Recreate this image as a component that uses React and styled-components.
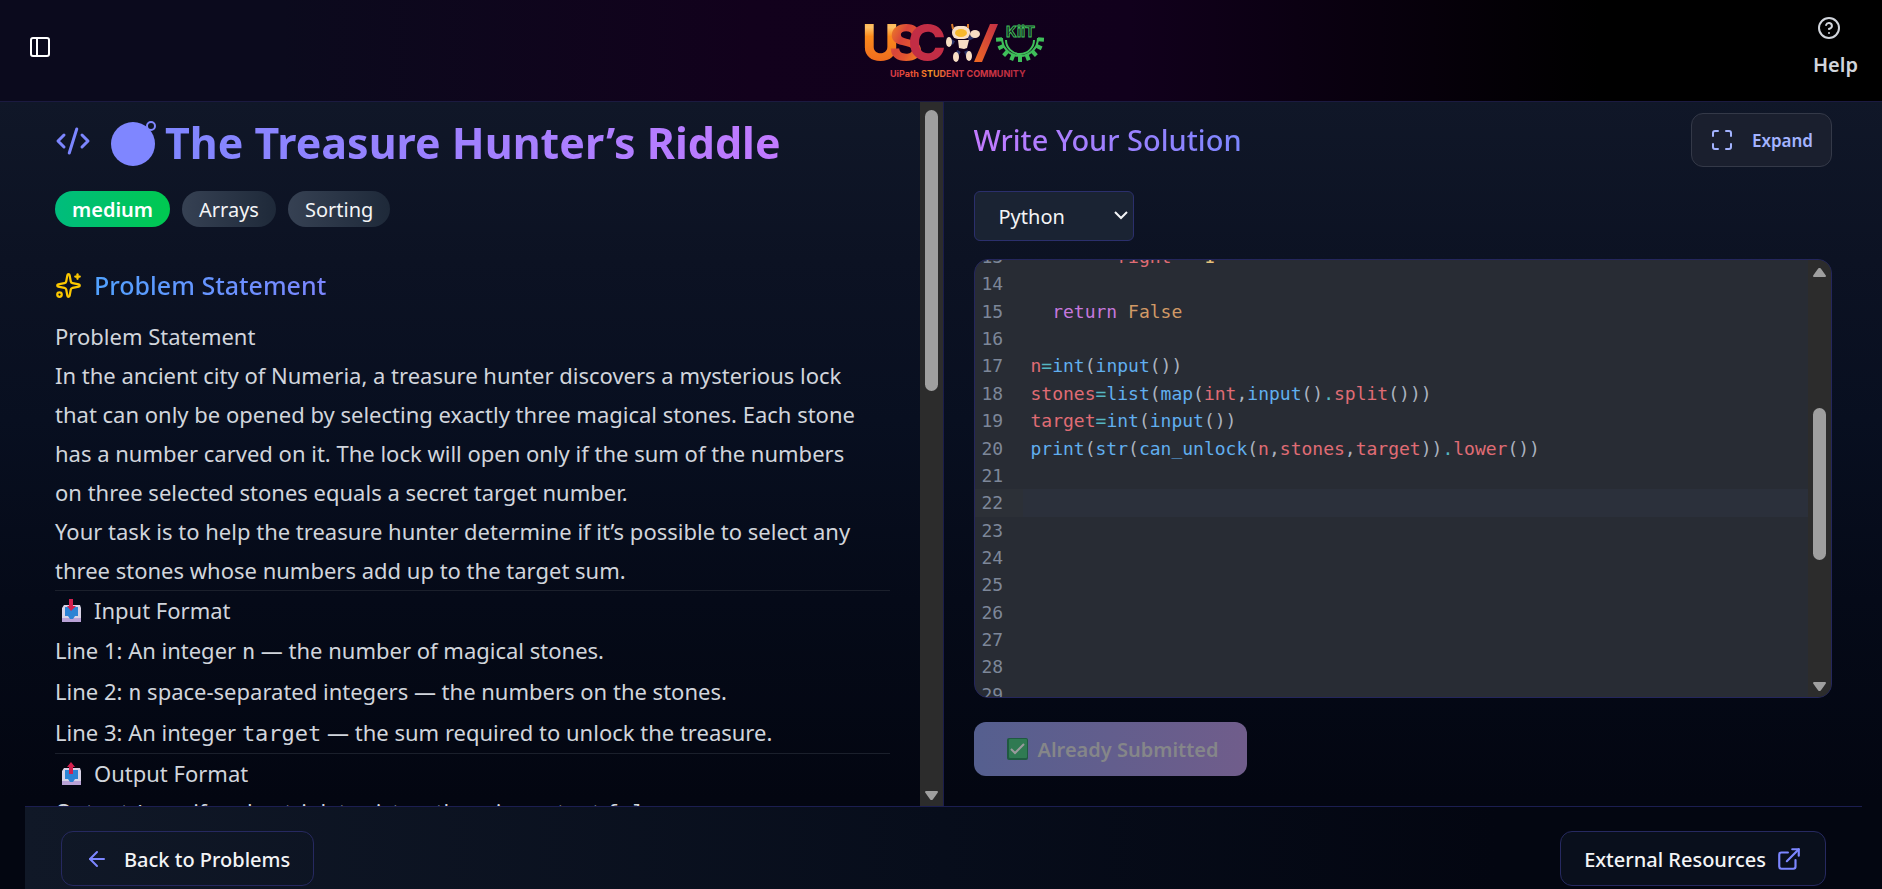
import React from "react";
import styled, { createGlobalStyle } from "styled-components";
import { PanelLeft, CircleHelp, CodeXml, Sparkles, Maximize, ArrowLeft, ExternalLink } from "lucide-react";

const sans = `"Noto Sans", "Open Sans", sans-serif`;
const mono = `"DejaVu Sans Mono", "Liberation Mono", monospace`;

const Global = createGlobalStyle`
  *, *::before, *::after { box-sizing: border-box; }
  body { margin: 0; background: #030712; color: #d1d5dc; font-family: ${sans}; }
  h1, h2, p { margin: 0; }
  button, select { font-family: inherit; }
`;

const Page = styled.div`
  height: 100vh;
  display: flex;
  flex-direction: column;
  overflow: hidden;
  background: linear-gradient(180deg, #101728 100px, #0c1223 260px, #080f20 420px, #050a18 600px, #030611 800px);
`;

const Header = styled.header`
  flex: none;
  display: grid;
  grid-template-columns: 1fr auto 1fr;
  align-items: center;
  height: 102px;
  padding: 0 24px 0 28px;
  border-bottom: 1px solid #1b1a40;
  background: linear-gradient(90deg, #0b0a1d 0%, #0b0a1d 15%, #12011c 40%, #11001c 60%, #000 85%);
`;

const MenuButton = styled.button`
  justify-self: start;
  display: flex;
  margin-bottom: 7px;
  padding: 0;
  border: 0;
  background: none;
  color: #fff;
`;

const HelpLink = styled.a`
  justify-self: end;
  display: flex;
  flex-direction: column;
  gap: 10px;
  margin-bottom: 6px;
  color: #d1d5dc;
  font-size: 20px;
  line-height: 30px;
  font-weight: 600;
  text-decoration: none;
  svg { margin-left: 4px; }
`;

const LogoBox = styled.svg`
  display: block;
  width: 190px;
  height: 70px;
  margin-left: 24px;
`;

const Workspace = styled.main`
  flex: 1;
  min-height: 0;
  display: flex;
  flex-direction: column;
  padding: 0 20px 0 25px;
`;

const Panes = styled.div`
  flex: 1;
  min-height: 0;
  display: grid;
  grid-template-columns: 1fr 1fr;
  grid-template-rows: minmax(0, 1fr);
`;

const ProblemPane = styled.section`
  min-width: 0;
  min-height: 0;
  display: flex;
  border-right: 1px solid #1b1d4c;
`;

const ProblemBody = styled.div`
  flex: 1;
  min-width: 0;
  overflow: hidden;
  padding: 12px 30px 0;
`;

const TitleRow = styled.div`
  display: flex;
  align-items: center;
  height: 58px;
  color: #7c86ff;
  > svg { margin-bottom: 5px; }
`;

const Title = styled.h1`
  display: flex;
  align-items: center;
  margin-left: 20px;
  white-space: nowrap;
  font-size: 43px;
  line-height: 58px;
  font-weight: 700;
  span {
    background: linear-gradient(90deg, #7f86ff, #c27aff);
    background-clip: text;
    color: transparent;
  }
`;

const Badges = styled.div`
  display: flex;
  gap: 12px;
  margin-top: 19px;
`;

const Badge = styled.span`
  height: 36px;
  padding: 0 17px;
  border-radius: 18px;
  font-size: 20px;
  line-height: 37px;
  color: ${(p) => (p.$level ? "#fff" : "#f3f4f6")};
  font-weight: ${(p) => (p.$level ? 600 : 400)};
  background: ${(p) => (p.$level ? "linear-gradient(90deg, #00bc7d, #00c950)" : "linear-gradient(90deg, #364153, #1e2939)")};
`;

const SectionHead = styled.div`
  display: flex;
  align-items: center;
  gap: 12px;
  margin: 38px 0 12px;
  color: #fcc800;
`;

const GradientHeading = styled.h2`
  font-weight: 500;
  font-size: ${(p) => p.$size}px;
  line-height: 40px;
  background: linear-gradient(90deg, ${(p) => p.$from}, ${(p) => p.$to});
  background-clip: text;
  color: transparent;
`;

const Prose = styled.div`
  font-size: 22px;
  line-height: 39px;
`;

const Paragraph = styled.p`
  max-width: 818px;
`;

const FormatHead = styled.p`
  display: flex;
  align-items: center;
  gap: 12px;
  padding-left: 7px;
  border-top: 1px solid #1b202c;
`;

const FormatLine = styled.p`
  line-height: ${(p) => (p.$tight ? 37 : 41)}px;
  white-space: nowrap;
  code { font-family: ${mono}; font-size: 22px; line-height: 1; }
`;

const Track = styled.div`
  flex: none;
  display: flex;
  flex-direction: column;
  align-items: center;
  justify-content: space-between;
  width: 23px;
  padding: 6px 0 4px;
  background: #2c2c2c;
`;

const Thumb = styled.div`
  width: 13px;
  height: ${(p) => p.$h};
  margin-top: ${(p) => p.$top};
  margin-bottom: auto;
  border-radius: 7px;
  background: #9f9f9f;
`;

const SolutionPane = styled.section`
  min-width: 0;
  min-height: 0;
  display: flex;
  flex-direction: column;
  padding: 11px 30px 30px;
`;

const SolutionHead = styled.div`
  display: flex;
  justify-content: space-between;
  align-items: center;
`;

const ExpandButton = styled.button`
  display: flex;
  align-items: center;
  gap: 18px;
  height: 54px;
  padding: 0 18px;
  border: 1px solid #343948;
  border-radius: 12px;
  background: #1a1f2e;
  color: #a3b3ff;
  font-size: 17px;
  font-weight: 600;
`;

const SelectWrap = styled.label`
  position: relative;
  width: 160px;
  margin: 24px 0 18px;
  svg { position: absolute; right: 6px; top: 18px; pointer-events: none; }
`;

const LanguageSelect = styled.select`
  appearance: none;
  display: block;
  width: 100%;
  height: 50px;
  padding: 0 24px;
  border: 1px solid #2b2f6c;
  border-radius: 6px;
  background: #1a2333;
  color: #f3f4f6;
  font-size: 20px;
`;

const Editor = styled.div`
  flex: 1;
  min-height: 0;
  display: flex;
  overflow: hidden;
  border: 1px solid #24265c;
  border-radius: 14px;
  background: #282c34;
`;

const Code = styled.div`
  flex: 1;
  min-width: 0;
  margin-top: -17px;
  outline: none;
  color: #abb2bf;
  font-family: ${mono};
  font-size: 18px;
  line-height: 1.52;
  white-space: pre;
`;

const CodeLine = styled.div`
  display: flex;
  background: ${(p) => (p.$active ? "#2b303b" : "none")};
`;

const Gutter = styled.span`
  width: 48px;
  padding-left: 7px;
  color: #7d8799;
  background: ${(p) => (p.$active ? "#2c3037" : "none")};
`;

const Source = styled.code`
  padding-left: 8px;
  font-family: inherit;
`;

const tokenColors = { k: "#c678dd", a: "#d19a66", v: "#e06c75", f: "#61afef", o: "#56b6c2", d: "#e5c07b", p: "#abb2bf" };
const Token = styled.span`
  color: ${(p) => tokenColors[p.$kind]};
`;

const SubmitButton = styled.button`
  align-self: flex-start;
  flex: none;
  display: flex;
  align-items: center;
  gap: 10px;
  height: 54px;
  margin-top: 24px;
  padding: 0 28px 0 33px;
  border: 0;
  border-radius: 12px;
  background: linear-gradient(90deg, #555f8f, #705d8b);
  color: #858689;
  font-size: 20px;
  font-weight: 600;
`;

const Footer = styled.footer`
  flex: none;
  display: flex;
  justify-content: space-between;
  height: 83px;
  padding: 24px 36px 3px;
  border-top: 1px solid #1b1e50;
  background: linear-gradient(90deg, #101827, #070d1b 50%, #030611 80%);
`;

const FooterLink = styled.a`
  display: flex;
  align-items: center;
  gap: ${(p) => p.$gap}px;
  height: 55px;
  padding: 1px 23px 0;
  border: 1px solid #262960;
  border-radius: 12px;
  background: ${(p) => p.$bg};
  color: #f3f4f6;
  font-size: 20px;
  font-weight: 500;
  text-decoration: none;
  svg { color: #7c86ff; }
`;

function Logo() {
  const teeth = [];
  for (let i = 0; i <= 8; i++) {
    const a = ((i * 21.5 + 4) * Math.PI) / 180;
    teeth.push(
      <path
        key={i}
        d={`M${160 + 18 * Math.cos(a)} ${22 + 18 * Math.sin(a)}L${160 + 24 * Math.cos(a)} ${22 + 24 * Math.sin(a)}`}
        strokeWidth="4"
      />
    );
  }
  return (
    <LogoBox viewBox="0 0 190 70" role="img" aria-label="USC KIIT, UiPath Student Community">
      <defs>
        <linearGradient id="u" x1="0" y1="0" x2="0" y2="1"><stop offset="0" stopColor="#fb9a1c" /><stop offset="0.25" stopColor="#ffc267" /><stop offset="0.4" stopColor="#fb8a1c" /><stop offset="1" stopColor="#e85d1f" /></linearGradient>
        <linearGradient id="s" x1="0" y1="0" x2="1" y2="1"><stop offset="0" stopColor="#fba31c" /><stop offset="0.4" stopColor="#d8443a" /><stop offset="0.6" stopColor="#e2542f" /><stop offset="1" stopColor="#fba31c" /></linearGradient>
        <linearGradient id="w" x1="0" x2="1"><stop offset="0" stopColor="#d8384a" /><stop offset="0.22" stopColor="#ef5b2c" /><stop offset="0.3" stopColor="#f6a022" /><stop offset="0.45" stopColor="#dd3f45" /><stop offset="1" stopColor="#b92c42" /></linearGradient>
        <linearGradient id="slash" x1="0" y1="1" x2="1" y2="0"><stop offset="0" stopColor="#ee6a22" /><stop offset="1" stopColor="#c32f45" /></linearGradient>
      </defs>
      <g fontFamily="Inter, sans-serif" fontWeight="800" fontSize="51">
        <text x="2" y="45" fill="url(#u)">U</text>
        <text x="29" y="45" fill="url(#s)">S</text>
        <text x="48" y="45" fill="#c22d45">C</text>
      </g>
      <g stroke="#2c3468" strokeWidth="4" fill="none"><path d="M94 27l-5-3M108 23l8-4M99 35l-3 5M106 35l2 5" /></g>
      <g fill="#f8dfc4">
        <ellipse cx="89" cy="26" rx="3" ry="5" /><ellipse cx="115" cy="18" rx="5" ry="4" />
        <rect x="92" y="10" width="18" height="13" rx="6" /><path d="M98 24h11l-2 8-3 1-5-1z" />
        <ellipse cx="96" cy="41" rx="3" ry="5" /><ellipse cx="109" cy="40" rx="3" ry="5" />
      </g>
      <ellipse cx="101" cy="17" rx="6" ry="4" fill="#f7b92c" />
      <path d="M93 13l-1-5M108 12l0-4" stroke="#d97a2a" strokeWidth="2" />
      <path d="M114 46h8l16-38h-8z" fill="url(#slash)" />
      <g stroke="#3fbf5a" fill="none" strokeWidth="2">
        <path d="M142 22a18 18 0 0 0 36 0M146 24a14 14 0 0 0 28 0" />
        {teeth}
      </g>
      <text x="146" y="21" fontFamily="Inter, sans-serif" fontWeight="700" fontSize="15" fill="#100318" stroke="#3fbf5a">KiiT</text>
      <text x="30" y="61" fontFamily="Inter, sans-serif" fontWeight="700" fontSize="9" fill="url(#w)">UiPath STUDENT COMMUNITY</text>
    </LogoBox>
  );
}

const CoinGlyph = () => (
  <svg width="54" height="50" viewBox="0 0 54 50" aria-hidden="true">
    <circle cx="22" cy="26" r="22" fill="#7f86ff" />
    <circle cx="40" cy="8" r="4" fill="#0f1626" stroke="#7f86ff" strokeWidth="2" />
  </svg>
);

const TrayIcon = ({ up }) => (
  <svg width="20" height="24" viewBox="0 0 20 24" role="img" aria-label={up ? "outbox" : "inbox"}>
    <path d="M2 6h16l1 3v14H0V9z" fill="#d8d3e6" />
    <path d="M0 19h19v4H0z" fill="#b9a2d6" />
    <path d="M3 8h13v9l-3 0-2 3H8l-2-3H3z" fill="#2b83d4" />
    {up ? <path d="M9 0l4 5h-2v7H7V5H5z" fill="#d3204e" /> : <path d="M7 0h4v7h3l-5 5-4-5h2z" fill="#d3204e" />}
  </svg>
);

const CheckBoxIcon = () => (
  <svg width="21" height="22" viewBox="0 0 21 22" aria-hidden="true">
    <rect width="21" height="22" rx="2" fill="#1f5a40" />
    <rect x="2" y="1" width="18" height="19" rx="1" fill="#2f7a52" />
    <path d="M4 11l4 4 9-9" fill="none" stroke="#9a9b9d" strokeWidth="2" />
  </svg>
);

const Arrow = ({ down }) => (
  <svg width="15" height="12" viewBox="0 0 15 12" aria-hidden="true">
    <path d={down ? "M2 2h11l-5 7h-1z" : "M2 10h11l-5-7h-1z"} fill="#9f9f9f" stroke="#9f9f9f" strokeWidth="2" strokeLinejoin="round" />
  </svg>
);

const lines = [
  [13, [["p", "        "], ["v", "right "], ["o", "-="], ["d", "1"]]],
  [14, []],
  [15, [["p", "  "], ["k", "return "], ["a", "False"]]],
  [16, []],
  [17, [["v", "n"], ["o", "="], ["f", "int"], ["p", "("], ["f", "input"], ["p", "())"]]],
  [18, [["v", "stones"], ["o", "="], ["f", "list"], ["p", "("], ["f", "map"], ["p", "("], ["v", "int"], ["p", ","], ["f", "input"], ["p", "()"], ["o", "."], ["v", "split"], ["p", "()))"]]],
  [19, [["v", "target"], ["o", "="], ["f", "int"], ["p", "("], ["f", "input"], ["p", "())"]]],
  [20, [["f", "print"], ["p", "("], ["f", "str"], ["p", "("], ["f", "can_unlock"], ["p", "("], ["v", "n"], ["p", ","], ["v", "stones"], ["p", ","], ["v", "target"], ["p", "))"], ["o", "."], ["v", "lower"], ["p", "())"]]],
  [21, []], [22, []], [23, []], [24, []], [25, []], [26, []], [27, []], [28, []], [29, []],
];

export default function App() {
  return (
    <Page>
      <Global />
      <Header>
        <MenuButton type="button" aria-label="Toggle sidebar"><PanelLeft size={24} /></MenuButton>
        <Logo />
        <HelpLink href="#help"><CircleHelp size={24} />Help</HelpLink>
      </Header>
      <Workspace>
        <Panes>
          <ProblemPane>
            <ProblemBody>
              <TitleRow>
                <CodeXml size={36} />
                <Title><CoinGlyph /><span>The Treasure Hunter’s Riddle</span></Title>
              </TitleRow>
              <Badges>
                <Badge $level>medium</Badge>
                <Badge>Arrays</Badge>
                <Badge>Sorting</Badge>
              </Badges>
              <SectionHead>
                <Sparkles size={27} />
                <GradientHeading $size={25} $from="#51a2ff" $to="#7c86ff">Problem Statement</GradientHeading>
              </SectionHead>
              <Prose>
                <Paragraph>Problem Statement</Paragraph>
                <Paragraph>In the ancient city of Numeria, a treasure hunter discovers a mysterious lock that can only be opened by selecting exactly three magical stones. Each stone has a number carved on it. The lock will open only if the sum of the numbers on three selected stones equals a secret target number.</Paragraph>
                <Paragraph>Your task is to help the treasure hunter determine if it’s possible to select any three stones whose numbers add up to the target sum.</Paragraph>
                <FormatHead><TrayIcon />Input Format</FormatHead>
                <FormatLine>Line 1: An integer <code>n</code> — the number of magical stones.</FormatLine>
                <FormatLine>Line 2: <code>n</code> space-separated integers — the numbers on the stones.</FormatLine>
                <FormatLine>Line 3: An integer <code>target</code> — the sum required to unlock the treasure.</FormatLine>
                <FormatHead><TrayIcon up />Output Format</FormatHead>
                <FormatLine $tight>Output <code>true</code> if such a triplet exists, otherwise output <code>false</code>.</FormatLine>
              </Prose>
            </ProblemBody>
            <Track><Thumb $h="281px" $top="2px" /><Arrow down /></Track>
          </ProblemPane>
          <SolutionPane>
            <SolutionHead>
              <GradientHeading $size={29} $from="#c27aff" $to="#7c86ff">Write Your Solution</GradientHeading>
              <ExpandButton type="button"><Maximize size={24} />Expand</ExpandButton>
            </SolutionHead>
            <SelectWrap>
              <LanguageSelect aria-label="Language" defaultValue="python"><option value="python">Python</option></LanguageSelect>
              <svg width="14" height="14" viewBox="0 0 14 14" aria-hidden="true"><path d="M1 3l6 6 6-6" fill="none" stroke="#f3f4f6" strokeWidth="2" /></svg>
            </SelectWrap>
            <Editor>
              <Code role="textbox" aria-multiline="true" aria-label="Code editor" spellCheck={false}>
                {lines.map(([no, tokens]) => (
                  <CodeLine key={no} $active={no === 22}>
                    <Gutter $active={no === 22}>{no}</Gutter>
                    <Source>{tokens.map(([kind, text], i) => <Token key={i} $kind={kind}>{text}</Token>)}</Source>
                  </CodeLine>
                ))}
              </Code>
              <Track><Arrow /><Thumb $h="152px" $top="130px" /><Arrow down /></Track>
            </Editor>
            <SubmitButton type="button" disabled><CheckBoxIcon />Already Submitted</SubmitButton>
          </SolutionPane>
        </Panes>
        <Footer>
          <FooterLink href="#problems" $gap={15} $bg="transparent"><ArrowLeft size={24} />Back to Problems</FooterLink>
          <FooterLink href="#resources" $gap={10} $bg="#090f1c">External Resources<ExternalLink size={26} /></FooterLink>
        </Footer>
      </Workspace>
    </Page>
  );
}
